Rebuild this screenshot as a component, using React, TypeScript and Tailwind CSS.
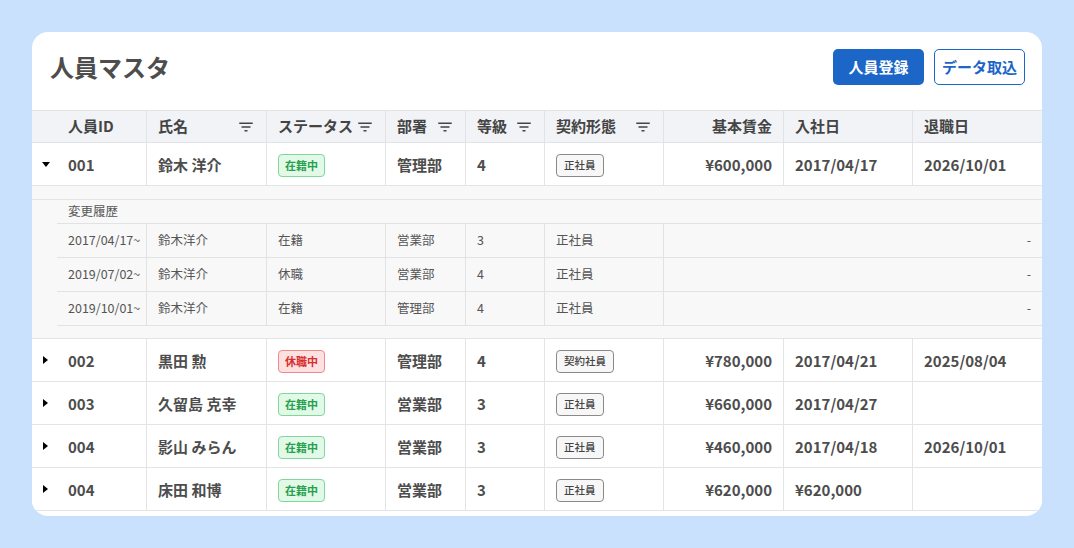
import React from 'react';
import { MdFilterList } from 'react-icons/md';

const grid = 'grid grid-cols-[25px_90px_120px_119px_80px_79px_119px_120px_129px_129px]';

const staff = [
  { id: '001', name: '鈴木 洋介', status: '在籍中', dept: '管理部', grade: '4', contract: '正社員', wage: '¥600,000', joined: '2017/04/17', left: '2026/10/01', open: true },
  { id: '002', name: '黒田 勲', status: '休職中', dept: '管理部', grade: '4', contract: '契約社員', wage: '¥780,000', joined: '2017/04/21', left: '2025/08/04' },
  { id: '003', name: '久留島 克幸', status: '在籍中', dept: '営業部', grade: '3', contract: '正社員', wage: '¥660,000', joined: '2017/04/27', left: '' },
  { id: '004', name: '影山 みらん', status: '在籍中', dept: '営業部', grade: '3', contract: '正社員', wage: '¥460,000', joined: '2017/04/18', left: '2026/10/01' },
  { id: '004', name: '床田 和博', status: '在籍中', dept: '営業部', grade: '3', contract: '正社員', wage: '¥620,000', joined: '¥620,000', left: '' },
];

const history = [
  { from: '2017/04/17~', name: '鈴木洋介', status: '在籍', dept: '営業部', grade: '3', contract: '正社員' },
  { from: '2019/07/02~', name: '鈴木洋介', status: '休職', dept: '営業部', grade: '4', contract: '正社員' },
  { from: '2019/10/01~', name: '鈴木洋介', status: '在籍', dept: '管理部', grade: '4', contract: '正社員' },
];

const HeadCell = ({ label, filter = false, right = false, last = false }) => (
  <div className={`flex items-center px-[11px] ${right ? 'justify-end' : 'justify-between'} ${last ? '' : 'border-r border-[#e1e3e7]'}`}>
    <span>{label}</span>
    {filter && <MdFilterList size={18} className="text-[#444]" />}
  </div>
);

const StatusBadge = ({ value }) => {
  const off = value === '休職中';
  return (
    <span className={`inline-flex h-[23px] items-center rounded-[4px] border px-[6px] text-[11px] font-bold ${off ? 'border-[#f08a8a] bg-[#fde1e1] text-[#d62f2f]' : 'border-[#7fd79a] bg-[#e2f9e8] text-[#25a14d]'}`}>
      {value}
    </span>
  );
};

const ContractBadge = ({ value }) => (
  <span className="inline-flex h-[23px] items-center rounded-[4px] border border-[#8a8a8a] bg-[#f7f7f7] px-[7px] text-[10.5px] font-medium text-[#444]">
    {value}
  </span>
);

const Cell = ({ children, right = false, last = false }) => (
  <div className={`flex items-center px-[11px] pt-[2px] ${right ? 'justify-end' : ''} ${last ? '' : 'border-r border-[#e4e4e4]'}`}>
    {children}
  </div>
);

const StaffRow = ({ s }) => (
  <div className={`${grid} h-[43px] border-b border-[#e4e4e4] bg-white text-[15px] font-semibold text-[#4d4d4d]`}>
    <div className="flex items-center justify-center pl-[2px]">
      {s.open ? (
        <span className="h-0 w-0 border-x-[4px] border-t-[5px] border-x-transparent border-t-black" />
      ) : (
        <span className="h-0 w-0 border-y-[4px] border-l-[5px] border-y-transparent border-l-black" />
      )}
    </div>
    <Cell>{s.id}</Cell>
    <Cell>{s.name}</Cell>
    <Cell><StatusBadge value={s.status} /></Cell>
    <Cell>{s.dept}</Cell>
    <Cell>{s.grade}</Cell>
    <Cell><ContractBadge value={s.contract} /></Cell>
    <Cell right>{s.wage}</Cell>
    <Cell>{s.joined}</Cell>
    <Cell last>{s.left}</Cell>
  </div>
);

const SubCell = ({ children }) => (
  <div className="flex items-center border-b border-r border-[#e2e2e2] px-[11px]">{children}</div>
);

const History = () => (
  <div className="bg-[#f8f8f8] text-[12.5px] text-[#555]">
    <div className="h-[14px] border-b border-[#e4e4e4]" />
    <div className={`${grid} h-[24px]`}>
      <div />
      <div className="col-span-9 flex items-center border-b border-[#e2e2e2] px-[11px]">変更履歴</div>
    </div>
    {history.map(h => (
      <div key={h.from} className={`${grid} h-[34px]`}>
        <div />
        <SubCell>{h.from}</SubCell>
        <SubCell>{h.name}</SubCell>
        <SubCell>{h.status}</SubCell>
        <SubCell>{h.dept}</SubCell>
        <SubCell>{h.grade}</SubCell>
        <SubCell>{h.contract}</SubCell>
        <div className="col-span-3 flex items-center justify-end border-b border-[#e2e2e2] px-[11px]">-</div>
      </div>
    ))}
    <div className="h-[13px] border-b border-[#e4e4e4]" />
  </div>
);

const App = () => {
  return (
    <div className="min-h-screen bg-[#c9e1fd] p-8" style={{ fontFamily: '"Noto Sans CJK JP", "Noto Sans", sans-serif' }}>
      <div className="h-[484px] w-[1010px] overflow-hidden rounded-[16px] bg-white">
        <div className="flex h-[78px] items-center justify-between pb-[8px] pl-[18px] pr-[17px]">
          <h1 className="text-[24px] font-bold text-[#4d4d4d]">人員マスタ</h1>
          <div className="flex gap-[10px]">
            <button className="h-[36px] w-[91px] rounded-[5px] bg-[#1b66c6] text-[15px] font-bold text-white">人員登録</button>
            <button className="h-[36px] w-[91px] rounded-[5px] border border-[#1b66c6] bg-white text-[15px] font-bold text-[#1b66c6]">データ取込</button>
          </div>
        </div>
        <div className={`${grid} h-[33px] border-y border-[#e1e3e7] bg-[#f1f3f6] text-[15px] font-semibold text-[#444]`}>
          <div />
          <HeadCell label="人員ID" />
          <HeadCell label="氏名" filter />
          <HeadCell label="ステータス" filter />
          <HeadCell label="部署" filter />
          <HeadCell label="等級" filter />
          <HeadCell label="契約形態" filter />
          <HeadCell label="基本賃金" right />
          <HeadCell label="入社日" />
          <HeadCell label="退職日" last />
        </div>
        {staff.map((s, i) => (
          <React.Fragment key={i}>
            <StaffRow s={s} />
            {s.open && <History />}
          </React.Fragment>
        ))}
      </div>
    </div>
  );
};

export default App;
